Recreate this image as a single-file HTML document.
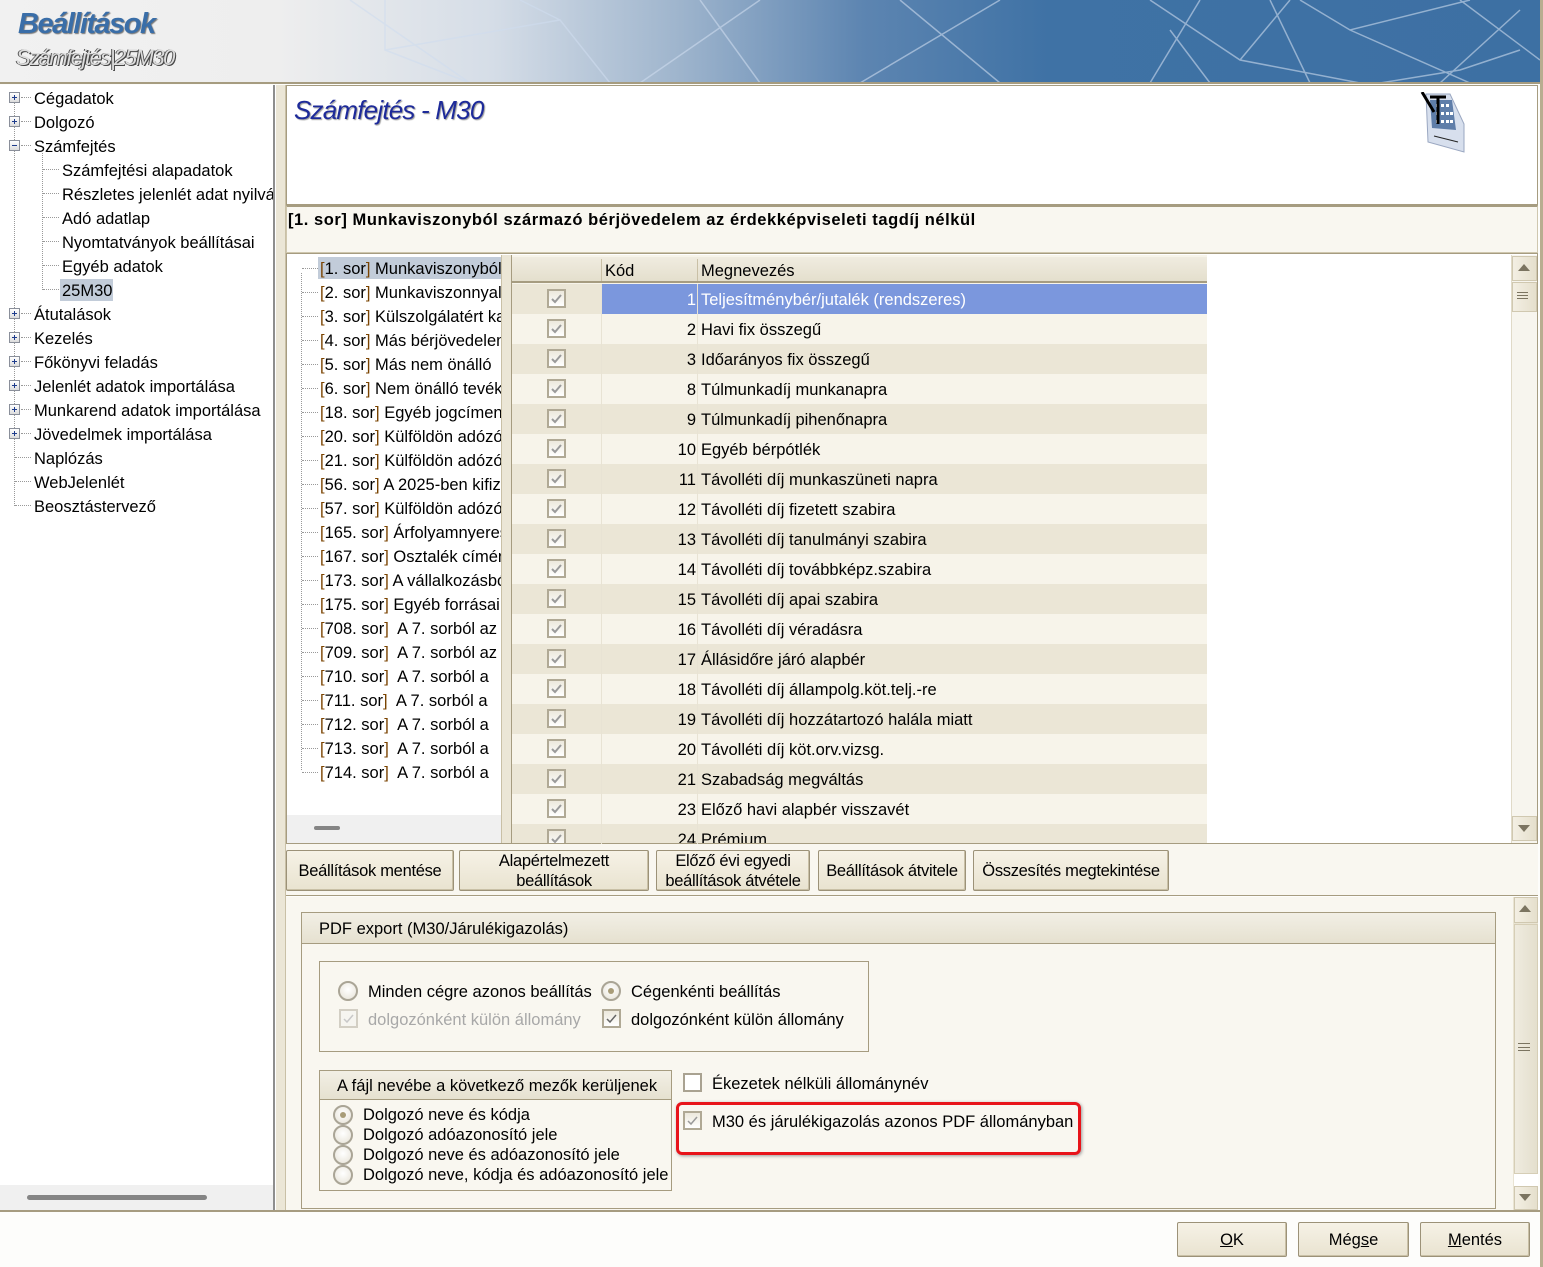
<!DOCTYPE html>
<html><head><meta charset="utf-8">
<style>
*{box-sizing:border-box;margin:0;padding:0}
body{width:1543px;height:1267px;position:relative;overflow:hidden;background:#fdfdfb;font-family:"Liberation Sans",sans-serif;font-size:16.5px;color:#000}
.a{position:absolute}
.t{position:absolute;white-space:nowrap;line-height:20px;padding-top:1px}
.pm{position:absolute;width:11px;height:11px;border:1px solid #8a8f9a;background:linear-gradient(#fff,#dcdcdc)}
.pm:before{content:"";position:absolute;left:2px;top:4px;width:5px;height:1px;background:#1e3c8c}
.pm.p:after{content:"";position:absolute;left:4px;top:2px;width:1px;height:5px;background:#1e3c8c}
.dh{position:absolute;height:0;border-top:1px dotted #999}
.dv{position:absolute;width:0;border-left:1px dotted #999}
.cb{position:absolute;width:19px;height:19px;border:2px solid #b0a995;background:linear-gradient(#ece8dc,#fff)}
.cb svg{position:absolute;left:1px;top:1px}
.row{position:absolute;left:512px;width:695px;height:30px}
.row .k{position:absolute;left:89px;width:95px;text-align:right;top:6px;line-height:20px}
.row .n{position:absolute;left:189px;top:6px;line-height:20px;white-space:nowrap}
.row .cb{left:35px;top:5px}
.btn{position:absolute;border:1px solid #9c9278;border-radius:2px;background:linear-gradient(#f6f2e6,#e9e3d0);text-align:center;line-height:20px;letter-spacing:-0.3px;box-shadow:inset -1px -1px 0 #c9c0a6}
.rad{position:absolute;width:20px;height:20px;border-radius:50%;border:2px solid #aaa596;background:radial-gradient(circle at 50% 40%,#fff,#e6e2d6)}
.rad.on:after{content:"";position:absolute;left:5px;top:5px;width:6px;height:6px;border-radius:50%;background:#a89c78}
.br{color:#7a4300}
</style></head><body>

<div class="a" style="left:0;top:0;width:1540px;height:83px;background:linear-gradient(90deg,#f1f1f1 0%,#eeeeee 18%,#d5dde7 32%,#9fb5cd 44%,#5d85b1 56%,#3f72a5 68%,#3d70a3 100%);overflow:hidden">
<svg width="1540" height="83" style="position:absolute;left:0;top:0" stroke="#cfdcee" stroke-opacity="0.6" stroke-width="1.5" fill="none">
<path d="M350 0 L470 83 M385 0 L385 50 L470 83 M385 50 L560 20 L610 83 M560 20 L520 0 M700 0 L760 83 M760 0 L640 83 M900 0 L1000 83 M1000 0 L860 83 M1150 0 L1240 60 L1360 83 M1200 0 L1150 83 M1270 0 L1310 83 M1300 0 L1350 30 L1470 0 M1350 30 L1470 83 M1460 0 L1540 60 M1520 10 L1440 83 M1520 50 L1460 70 L1380 83 M1170 30 L1210 83 M1240 60 L1290 0"/>
</svg>
<div class="t" style="left:18px;top:6px;font-size:29px;line-height:34px;font-weight:bold;font-style:italic;color:#3a6ea8;letter-spacing:-1.5px;text-shadow:1px 1px 1px #777">Beállítások</div>
<div class="t" style="left:16px;top:44px;font-size:22px;line-height:26px;font-style:italic;color:#dcdcdc;letter-spacing:-1.5px;text-shadow:1px 1px 0 #444,-1px 0 0 #555">Számfejtés|25M30</div>
</div>
<div class="a" style="left:0;top:82px;width:1540px;height:2px;background:#a69c80"></div>
<div class="a" style="left:1540px;top:0;width:3px;height:1267px;background:#b8ad90"></div>

<div class="a" style="left:0;top:85px;width:274px;height:1126px;background:#fff;overflow:hidden">
<div class="dv" style="left:14px;top:18px;height:403px"></div>
<div class="dv" style="left:42px;top:68px;height:137px"></div>
<div class="pm p" style="left:9px;top:7px"></div><div class="dh" style="left:21px;top:12px;width:10px"></div><div class="t" style="left:34px;top:3px">Cégadatok</div>
<div class="pm p" style="left:9px;top:31px"></div><div class="dh" style="left:21px;top:36px;width:10px"></div><div class="t" style="left:34px;top:27px">Dolgozó</div>
<div class="pm" style="left:9px;top:55px"></div><div class="dh" style="left:21px;top:60px;width:10px"></div><div class="t" style="left:34px;top:51px">Számfejtés</div>
<div class="dh" style="left:43px;top:84px;width:16px"></div><div class="t" style="left:62px;top:75px">Számfejtési alapadatok</div>
<div class="dh" style="left:43px;top:108px;width:16px"></div><div class="t" style="left:62px;top:99px">Részletes jelenlét adat nyilvántartás</div>
<div class="dh" style="left:43px;top:132px;width:16px"></div><div class="t" style="left:62px;top:123px">Adó adatlap</div>
<div class="dh" style="left:43px;top:156px;width:16px"></div><div class="t" style="left:62px;top:147px">Nyomtatványok beállításai</div>
<div class="dh" style="left:43px;top:180px;width:16px"></div><div class="t" style="left:62px;top:171px">Egyéb adatok</div>
<div class="dh" style="left:43px;top:204px;width:16px"></div><div class="a" style="left:60px;top:194px;width:53px;height:22px;background:#c2ccd9"></div><div class="t" style="left:62px;top:195px">25M30</div>
<div class="pm p" style="left:9px;top:223px"></div><div class="dh" style="left:21px;top:228px;width:10px"></div><div class="t" style="left:34px;top:219px">Átutalások</div>
<div class="pm p" style="left:9px;top:247px"></div><div class="dh" style="left:21px;top:252px;width:10px"></div><div class="t" style="left:34px;top:243px">Kezelés</div>
<div class="pm p" style="left:9px;top:271px"></div><div class="dh" style="left:21px;top:276px;width:10px"></div><div class="t" style="left:34px;top:267px">Főkönyvi feladás</div>
<div class="pm p" style="left:9px;top:295px"></div><div class="dh" style="left:21px;top:300px;width:10px"></div><div class="t" style="left:34px;top:291px">Jelenlét adatok importálása</div>
<div class="pm p" style="left:9px;top:319px"></div><div class="dh" style="left:21px;top:324px;width:10px"></div><div class="t" style="left:34px;top:315px">Munkarend adatok importálása</div>
<div class="pm p" style="left:9px;top:343px"></div><div class="dh" style="left:21px;top:348px;width:10px"></div><div class="t" style="left:34px;top:339px">Jövedelmek importálása</div>
<div class="dh" style="left:15px;top:372px;width:16px"></div><div class="t" style="left:34px;top:363px">Naplózás</div>
<div class="dh" style="left:15px;top:396px;width:16px"></div><div class="t" style="left:34px;top:387px">WebJelenlét</div>
<div class="dh" style="left:15px;top:420px;width:16px"></div><div class="t" style="left:34px;top:411px">Beosztástervező</div>
<div class="a" style="left:0;top:1100px;width:274px;height:26px;background:#f0f0f0"></div>
<div class="a" style="left:27px;top:1110px;width:180px;height:5px;border-radius:3px;background:#858585"></div>
</div>
<div class="a" style="left:273px;top:85px;width:2px;height:1126px;background:#8e8e8e"></div>
<div class="a" style="left:275px;top:85px;width:11px;height:1126px;background:#ebe6d6;border-left:1px solid #fff;border-right:1px solid #c9c0a6"></div>
<div class="a" style="left:0;top:1210px;width:1540px;height:2px;background:#a69c80"></div>

<div class="a" style="left:286px;top:85px;width:1252px;height:120px;background:#fff;border:1px solid #a69c80"></div>
<div class="t" style="left:294px;top:93px;font-size:26px;line-height:32px;font-style:italic;color:#1d2a9a;letter-spacing:-0.8px;text-shadow:1px 1px 1px #999">Számfejtés - M30</div>
<svg class="a" style="left:1418px;top:92px" width="50" height="62" viewBox="0 0 50 62">
<path d="M8 2 L32 2 L46 32 L46 60 L10 50 Z" fill="#d7dfed" stroke="#9aa7c1"/>
<path d="M12 8 L34 8 L38 38 L14 36 Z" fill="#5f7ea9"/>
<g fill="#fff"><rect x="18" y="12" width="3" height="3"/><rect x="23" y="12" width="3" height="3"/><rect x="28" y="12" width="3" height="3"/><rect x="18" y="20" width="3" height="3"/><rect x="23" y="20" width="3" height="3"/><rect x="28" y="20" width="3" height="3"/><rect x="32" y="20" width="3" height="3"/><rect x="18" y="28" width="3" height="3"/><rect x="23" y="28" width="3" height="3"/><rect x="28" y="28" width="3" height="3"/><rect x="32" y="28" width="3" height="3"/></g>
<path d="M4 0 L16 20 M12 5 L28 5 M20 5 L20 32" stroke="#000" stroke-width="3"/>
<path d="M16 44 L40 50" stroke="#222" stroke-width="1"/>
</svg>
<div class="a" style="left:286px;top:205px;width:1252px;height:48px;background:#f9f7f0;border:1px solid #cfc7ae;border-top:2px solid #a69c80"></div>
<div class="t" style="left:288px;top:209px;font-weight:bold;letter-spacing:0.55px">[1. sor] Munkaviszonyból származó bérjövedelem az érdekképviseleti tagdíj nélkül</div>

<div class="a" style="left:286px;top:253px;width:1252px;height:591px;border:1px solid #a69c80;background:#fff"></div>
<div class="a" style="left:287px;top:255px;width:214px;height:588px;background:#fff;overflow:hidden">
<div class="dv" style="left:14px;top:18px;height:497px"></div>
<div class="a" style="left:31px;top:2px;width:183px;height:22px;background:#c2ccd9"></div>
<div class="dh" style="left:15px;top:13px;width:16px"></div><div class="t" style="left:33px;top:3px"><span class="br">[</span>1. sor<span class="br">]</span> Munkaviszonyból származó</div>
<div class="dh" style="left:15px;top:37px;width:16px"></div><div class="t" style="left:33px;top:27px"><span class="br">[</span>2. sor<span class="br">]</span> Munkaviszonnyal</div>
<div class="dh" style="left:15px;top:61px;width:16px"></div><div class="t" style="left:33px;top:51px"><span class="br">[</span>3. sor<span class="br">]</span> Külszolgálatért kapott</div>
<div class="dh" style="left:15px;top:85px;width:16px"></div><div class="t" style="left:33px;top:75px"><span class="br">[</span>4. sor<span class="br">]</span> Más bérjövedelem</div>
<div class="dh" style="left:15px;top:109px;width:16px"></div><div class="t" style="left:33px;top:99px"><span class="br">[</span>5. sor<span class="br">]</span> Más nem önálló</div>
<div class="dh" style="left:15px;top:133px;width:16px"></div><div class="t" style="left:33px;top:123px"><span class="br">[</span>6. sor<span class="br">]</span> Nem önálló tevék</div>
<div class="dh" style="left:15px;top:157px;width:16px"></div><div class="t" style="left:33px;top:147px"><span class="br">[</span>18. sor<span class="br">]</span> Egyéb jogcímen</div>
<div class="dh" style="left:15px;top:181px;width:16px"></div><div class="t" style="left:33px;top:171px"><span class="br">[</span>20. sor<span class="br">]</span> Külföldön adózó</div>
<div class="dh" style="left:15px;top:205px;width:16px"></div><div class="t" style="left:33px;top:195px"><span class="br">[</span>21. sor<span class="br">]</span> Külföldön adózó</div>
<div class="dh" style="left:15px;top:229px;width:16px"></div><div class="t" style="left:33px;top:219px"><span class="br">[</span>56. sor<span class="br">]</span> A 2025-ben kifiz</div>
<div class="dh" style="left:15px;top:253px;width:16px"></div><div class="t" style="left:33px;top:243px"><span class="br">[</span>57. sor<span class="br">]</span> Külföldön adózó</div>
<div class="dh" style="left:15px;top:277px;width:16px"></div><div class="t" style="left:33px;top:267px"><span class="br">[</span>165. sor<span class="br">]</span> Árfolyamnyereség</div>
<div class="dh" style="left:15px;top:301px;width:16px"></div><div class="t" style="left:33px;top:291px"><span class="br">[</span>167. sor<span class="br">]</span> Osztalék címén</div>
<div class="dh" style="left:15px;top:325px;width:16px"></div><div class="t" style="left:33px;top:315px"><span class="br">[</span>173. sor<span class="br">]</span> A vállalkozásból</div>
<div class="dh" style="left:15px;top:349px;width:16px"></div><div class="t" style="left:33px;top:339px"><span class="br">[</span>175. sor<span class="br">]</span> Egyéb forrásai</div>
<div class="dh" style="left:15px;top:373px;width:16px"></div><div class="t" style="left:33px;top:363px"><span class="br">[</span>708. sor<span class="br">]</span>&nbsp; A 7. sorból az</div>
<div class="dh" style="left:15px;top:397px;width:16px"></div><div class="t" style="left:33px;top:387px"><span class="br">[</span>709. sor<span class="br">]</span>&nbsp; A 7. sorból az</div>
<div class="dh" style="left:15px;top:421px;width:16px"></div><div class="t" style="left:33px;top:411px"><span class="br">[</span>710. sor<span class="br">]</span>&nbsp; A 7. sorból a</div>
<div class="dh" style="left:15px;top:445px;width:16px"></div><div class="t" style="left:33px;top:435px"><span class="br">[</span>711. sor<span class="br">]</span>&nbsp; A 7. sorból a</div>
<div class="dh" style="left:15px;top:469px;width:16px"></div><div class="t" style="left:33px;top:459px"><span class="br">[</span>712. sor<span class="br">]</span>&nbsp; A 7. sorból a</div>
<div class="dh" style="left:15px;top:493px;width:16px"></div><div class="t" style="left:33px;top:483px"><span class="br">[</span>713. sor<span class="br">]</span>&nbsp; A 7. sorból a</div>
<div class="dh" style="left:15px;top:517px;width:16px"></div><div class="t" style="left:33px;top:507px"><span class="br">[</span>714. sor<span class="br">]</span>&nbsp; A 7. sorból a</div>
<div class="a" style="left:0;top:560px;width:214px;height:28px;background:#f0f0f0"></div>
<div class="a" style="left:27px;top:571px;width:26px;height:4px;border-radius:2px;background:#858585"></div>
</div>
<div class="a" style="left:501px;top:255px;width:11px;height:588px;background:#ebe6d6;border-left:1px solid #c9c0a6;border-right:1px solid #a69c80"></div>

<div class="a" style="left:512px;top:255px;width:695px;height:588px;background:#f7f4ea;overflow:hidden">
<div class="a" style="left:0;top:2px;width:695px;height:26px;background:linear-gradient(#f0ece0,#e4dfcd);border-bottom:2px solid #a69c80"></div>
<div class="a" style="left:89px;top:4px;width:1px;height:22px;background:#c9c0a6"></div>
<div class="a" style="left:185px;top:4px;width:1px;height:22px;background:#c9c0a6"></div>
<div class="t" style="left:93px;top:5px">Kód</div>
<div class="t" style="left:189px;top:5px">Megnevezés</div>
</div>
<div class="a" style="left:601px;top:284px;width:1px;height:560px;background:#e8e3d4;z-index:2"></div>
<div class="a" style="left:697px;top:284px;width:1px;height:560px;background:#e8e3d4;z-index:2"></div>
<div style="position:absolute;left:0;top:0;width:1543px;height:843px;overflow:hidden">
<div class="row" style="top:284px;background:#ebe6d6"><div class="a" style="left:89px;top:0;width:606px;height:30px;background:#7b97dd"></div><div class="cb"><svg width="13" height="13"><path d="M2 7 L5 10 L11 3" stroke="#9a9a9a" stroke-width="2" fill="none"/></svg></div><div class="k" style="color:#fff">1</div><div class="n" style="color:#fff">Teljesítménybér/jutalék (rendszeres)</div></div>
<div class="row" style="top:314px;background:#f7f4ea"><div class="cb"><svg width="13" height="13"><path d="M2 7 L5 10 L11 3" stroke="#9a9a9a" stroke-width="2" fill="none"/></svg></div><div class="k">2</div><div class="n">Havi fix összegű</div></div>
<div class="row" style="top:344px;background:#ebe6d6"><div class="cb"><svg width="13" height="13"><path d="M2 7 L5 10 L11 3" stroke="#9a9a9a" stroke-width="2" fill="none"/></svg></div><div class="k">3</div><div class="n">Időarányos fix összegű</div></div>
<div class="row" style="top:374px;background:#f7f4ea"><div class="cb"><svg width="13" height="13"><path d="M2 7 L5 10 L11 3" stroke="#9a9a9a" stroke-width="2" fill="none"/></svg></div><div class="k">8</div><div class="n">Túlmunkadíj munkanapra</div></div>
<div class="row" style="top:404px;background:#ebe6d6"><div class="cb"><svg width="13" height="13"><path d="M2 7 L5 10 L11 3" stroke="#9a9a9a" stroke-width="2" fill="none"/></svg></div><div class="k">9</div><div class="n">Túlmunkadíj pihenőnapra</div></div>
<div class="row" style="top:434px;background:#f7f4ea"><div class="cb"><svg width="13" height="13"><path d="M2 7 L5 10 L11 3" stroke="#9a9a9a" stroke-width="2" fill="none"/></svg></div><div class="k">10</div><div class="n">Egyéb bérpótlék</div></div>
<div class="row" style="top:464px;background:#ebe6d6"><div class="cb"><svg width="13" height="13"><path d="M2 7 L5 10 L11 3" stroke="#9a9a9a" stroke-width="2" fill="none"/></svg></div><div class="k">11</div><div class="n">Távolléti díj munkaszüneti napra</div></div>
<div class="row" style="top:494px;background:#f7f4ea"><div class="cb"><svg width="13" height="13"><path d="M2 7 L5 10 L11 3" stroke="#9a9a9a" stroke-width="2" fill="none"/></svg></div><div class="k">12</div><div class="n">Távolléti díj fizetett szabira</div></div>
<div class="row" style="top:524px;background:#ebe6d6"><div class="cb"><svg width="13" height="13"><path d="M2 7 L5 10 L11 3" stroke="#9a9a9a" stroke-width="2" fill="none"/></svg></div><div class="k">13</div><div class="n">Távolléti díj tanulmányi szabira</div></div>
<div class="row" style="top:554px;background:#f7f4ea"><div class="cb"><svg width="13" height="13"><path d="M2 7 L5 10 L11 3" stroke="#9a9a9a" stroke-width="2" fill="none"/></svg></div><div class="k">14</div><div class="n">Távolléti díj továbbképz.szabira</div></div>
<div class="row" style="top:584px;background:#ebe6d6"><div class="cb"><svg width="13" height="13"><path d="M2 7 L5 10 L11 3" stroke="#9a9a9a" stroke-width="2" fill="none"/></svg></div><div class="k">15</div><div class="n">Távolléti díj apai szabira</div></div>
<div class="row" style="top:614px;background:#f7f4ea"><div class="cb"><svg width="13" height="13"><path d="M2 7 L5 10 L11 3" stroke="#9a9a9a" stroke-width="2" fill="none"/></svg></div><div class="k">16</div><div class="n">Távolléti díj véradásra</div></div>
<div class="row" style="top:644px;background:#ebe6d6"><div class="cb"><svg width="13" height="13"><path d="M2 7 L5 10 L11 3" stroke="#9a9a9a" stroke-width="2" fill="none"/></svg></div><div class="k">17</div><div class="n">Állásidőre járó alapbér</div></div>
<div class="row" style="top:674px;background:#f7f4ea"><div class="cb"><svg width="13" height="13"><path d="M2 7 L5 10 L11 3" stroke="#9a9a9a" stroke-width="2" fill="none"/></svg></div><div class="k">18</div><div class="n">Távolléti díj állampolg.köt.telj.-re</div></div>
<div class="row" style="top:704px;background:#ebe6d6"><div class="cb"><svg width="13" height="13"><path d="M2 7 L5 10 L11 3" stroke="#9a9a9a" stroke-width="2" fill="none"/></svg></div><div class="k">19</div><div class="n">Távolléti díj hozzátartozó halála miatt</div></div>
<div class="row" style="top:734px;background:#f7f4ea"><div class="cb"><svg width="13" height="13"><path d="M2 7 L5 10 L11 3" stroke="#9a9a9a" stroke-width="2" fill="none"/></svg></div><div class="k">20</div><div class="n">Távolléti díj köt.orv.vizsg.</div></div>
<div class="row" style="top:764px;background:#ebe6d6"><div class="cb"><svg width="13" height="13"><path d="M2 7 L5 10 L11 3" stroke="#9a9a9a" stroke-width="2" fill="none"/></svg></div><div class="k">21</div><div class="n">Szabadság megváltás</div></div>
<div class="row" style="top:794px;background:#f7f4ea"><div class="cb"><svg width="13" height="13"><path d="M2 7 L5 10 L11 3" stroke="#9a9a9a" stroke-width="2" fill="none"/></svg></div><div class="k">23</div><div class="n">Előző havi alapbér visszavét</div></div>
<div class="row" style="top:824px;background:#ebe6d6"><div class="cb"><svg width="13" height="13"><path d="M2 7 L5 10 L11 3" stroke="#9a9a9a" stroke-width="2" fill="none"/></svg></div><div class="k">24</div><div class="n">Prémium</div></div>
</div>
<div class="a" style="left:1511px;top:255px;width:26px;height:588px;background:#f7f5ee;border-left:1px solid #e0dac8"></div>
<div class="a" style="left:1512px;top:256px;width:25px;height:25px;background:linear-gradient(90deg,#f3efe3,#e5dfcc);border:1px solid #d0c8b0"></div>
<div class="a" style="left:1518px;top:264px;width:0;height:0;border-left:6px solid transparent;border-right:6px solid transparent;border-bottom:7px solid #7b7460"></div>
<div class="a" style="left:1512px;top:282px;width:25px;height:30px;background:linear-gradient(90deg,#f3efe3,#e5dfcc);border:1px solid #d0c8b0"></div>
<div class="a" style="left:1517px;top:292px;width:11px;height:7px;border-top:1px solid #7b7460;border-bottom:1px solid #7b7460"></div>
<div class="a" style="left:1517px;top:295px;width:11px;height:1px;background:#7b7460"></div>
<div class="a" style="left:1512px;top:816px;width:25px;height:25px;background:linear-gradient(90deg,#f3efe3,#e5dfcc);border:1px solid #d0c8b0"></div>
<div class="a" style="left:1518px;top:825px;width:0;height:0;border-left:6px solid transparent;border-right:6px solid transparent;border-top:7px solid #7b7460"></div>

<div class="a" style="left:286px;top:844px;width:1252px;height:52px;background:#f9f7f0;border-bottom:1px solid #a69c80"></div>
<div class="btn" style="left:286px;top:850px;width:168px;height:41px;padding-top:10px">Beállítások mentése</div>
<div class="btn" style="left:459px;top:850px;width:190px;height:41px;padding-top:0">Alapértelmezett<br>beállítások</div>
<div class="btn" style="left:656px;top:850px;width:154px;height:41px;padding-top:0">Előző évi egyedi<br>beállítások átvétele</div>
<div class="btn" style="left:818px;top:850px;width:148px;height:41px;padding-top:10px">Beállítások átvitele</div>
<div class="btn" style="left:973px;top:850px;width:196px;height:41px;padding-top:10px">Összesítés megtekintése</div>

<div class="a" style="left:286px;top:897px;width:1252px;height:313px;background:#f9f7f0"></div>
<div class="a" style="left:301px;top:912px;width:1195px;height:297px;border:1px solid #a69c80;background:#f9f7f0"></div>
<div class="a" style="left:302px;top:913px;width:1193px;height:31px;background:linear-gradient(#f2efe5,#e6e1d0);border-bottom:1px solid #a69c80"></div>
<div class="t" style="left:319px;top:918px">PDF export (M30/Járulékigazolás)</div>

<div class="a" style="left:319px;top:961px;width:550px;height:91px;border:1px solid #a69c80"></div>
<div class="rad" style="left:338px;top:981px"></div><div class="t" style="left:368px;top:981px">Minden cégre azonos beállítás</div>
<div class="rad on" style="left:601px;top:981px"></div><div class="t" style="left:631px;top:981px">Cégenkénti beállítás</div>
<div class="cb" style="left:339px;top:1009px;border-color:#d3cfc4;background:#f6f5f0"><svg width="13" height="13"><path d="M2 7 L5 10 L11 3" stroke="#c8c8c8" stroke-width="1.5" fill="none"/></svg></div><div class="t" style="left:368px;top:1009px;color:#a8a8a8">dolgozónként külön állomány</div>
<div class="cb" style="left:602px;top:1009px"><svg width="13" height="13"><path d="M2 7 L5 10 L11 3" stroke="#666" stroke-width="1.5" fill="none"/></svg></div><div class="t" style="left:631px;top:1009px">dolgozónként külön állomány</div>

<div class="a" style="left:319px;top:1070px;width:353px;height:121px;border:1px solid #a69c80"></div>
<div class="a" style="left:320px;top:1071px;width:351px;height:29px;background:linear-gradient(#f2efe5,#e6e1d0);border-bottom:1px solid #a69c80"></div>
<div class="t" style="left:337px;top:1075px;width:332px;overflow:hidden">A fájl nevébe a következő mezők kerüljenek</div>
<div class="rad on" style="left:333px;top:1105px"></div><div class="t" style="left:363px;top:1104px">Dolgozó neve és kódja</div>
<div class="rad" style="left:333px;top:1125px"></div><div class="t" style="left:363px;top:1124px">Dolgozó adóazonosító jele</div>
<div class="rad" style="left:333px;top:1145px"></div><div class="t" style="left:363px;top:1144px">Dolgozó neve és adóazonosító jele</div>
<div class="rad" style="left:333px;top:1165px"></div><div class="t" style="left:363px;top:1164px;width:306px;overflow:hidden">Dolgozó neve, kódja és adóazonosító jele</div>

<div class="cb" style="left:683px;top:1073px;border-color:#a9a291;background:#fff"></div><div class="t" style="left:712px;top:1073px">Ékezetek nélküli állománynév</div>
<div class="a" style="left:676px;top:1102px;width:405px;height:53px;border:3px solid #e8141a;border-radius:6px;box-shadow:1px 1px 3px #999"></div>
<div class="cb" style="left:683px;top:1111px;border-color:#b0a995"><svg width="13" height="13"><path d="M2 7 L5 10 L11 3" stroke="#999" stroke-width="1.5" fill="none"/></svg></div><div class="t" style="left:712px;top:1111px">M30 és járulékigazolás azonos PDF állományban</div>

<div class="a" style="left:1513px;top:897px;width:25px;height:313px;background:#e9e4d3"></div>
<div class="a" style="left:1514px;top:897px;width:24px;height:26px;background:linear-gradient(90deg,#f3efe3,#e5dfcc);border:1px solid #d0c8b0"></div>
<div class="a" style="left:1519px;top:905px;width:0;height:0;border-left:6px solid transparent;border-right:6px solid transparent;border-bottom:7px solid #7b7460"></div>
<div class="a" style="left:1514px;top:924px;width:24px;height:250px;background:linear-gradient(90deg,#efebdf,#e4dfcd);border:1px solid #d6ceb6"></div>
<div class="a" style="left:1518px;top:1043px;width:12px;height:8px;border-top:1px solid #7b7460;border-bottom:1px solid #7b7460"></div>
<div class="a" style="left:1518px;top:1047px;width:12px;height:1px;background:#7b7460"></div>
<div class="a" style="left:1514px;top:1174px;width:24px;height:12px;background:#fff"></div>
<div class="a" style="left:1514px;top:1186px;width:24px;height:24px;background:linear-gradient(90deg,#f3efe3,#e5dfcc);border:1px solid #d0c8b0"></div>
<div class="a" style="left:1519px;top:1194px;width:0;height:0;border-left:6px solid transparent;border-right:6px solid transparent;border-top:7px solid #7b7460"></div>

<div class="btn" style="left:1177px;top:1222px;width:110px;height:35px;padding-top:7px;letter-spacing:0"><u>O</u>K</div>
<div class="btn" style="left:1298px;top:1222px;width:111px;height:35px;padding-top:7px;letter-spacing:0">Még<u>s</u>e</div>
<div class="btn" style="left:1420px;top:1222px;width:110px;height:35px;padding-top:7px;letter-spacing:0"><u>M</u>entés</div>
</body></html>
